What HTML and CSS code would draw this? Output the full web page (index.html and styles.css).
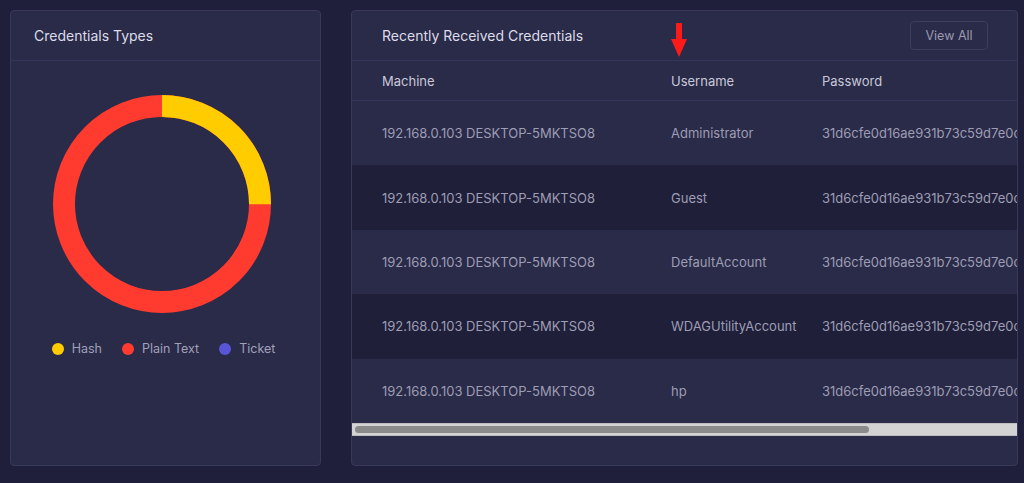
FILE: index.html
```html
<!DOCTYPE html>
<html>
<head>
    <title>Credentials</title>
    <link rel="stylesheet" href="styles.css">
</head>
<body>
    <div class="dashboard">
        <div class="card types">
            <div class="card-header">
                <h2>Credentials Types</h2>
            </div>
            <div class="chart-body">
                <svg class="donut" width="218" height="218" viewBox="0 0 218 218">
                    <circle cx="109" cy="109" r="98" fill="none" stroke="#ff3b30" stroke-width="22"/>
                    <circle cx="109" cy="109" r="98" fill="none" stroke="#ffcc00" stroke-width="22"
                            stroke-dasharray="153.94 615.75" transform="rotate(-90 109 109)"/>
                </svg>
                <div class="legend">
                    <span class="legend-item"><i class="dot hash"></i>Hash</span>
                    <span class="legend-item"><i class="dot plain"></i>Plain Text</span>
                    <span class="legend-item"><i class="dot ticket"></i>Ticket</span>
                </div>
            </div>
        </div>

        <div class="card recent">
            <div class="card-header">
                <h2>Recently Received Credentials</h2>
                <button class="btn">View All</button>
            </div>
            <div class="table-wrap">
                <table>
                    <colgroup>
                        <col class="col-machine">
                        <col class="col-user">
                        <col>
                    </colgroup>
                    <thead>
                        <tr><th>Machine</th><th>Username</th><th>Password</th></tr>
                    </thead>
                    <tbody>
                        <tr><td>192.168.0.103 DESKTOP-5MKTSO8</td><td>Administrator</td><td>31d6cfe0d16ae931b73c59d7e0c089c0</td></tr>
                        <tr><td>192.168.0.103 DESKTOP-5MKTSO8</td><td>Guest</td><td>31d6cfe0d16ae931b73c59d7e0c089c0</td></tr>
                        <tr><td>192.168.0.103 DESKTOP-5MKTSO8</td><td>DefaultAccount</td><td>31d6cfe0d16ae931b73c59d7e0c089c0</td></tr>
                        <tr><td>192.168.0.103 DESKTOP-5MKTSO8</td><td>WDAGUtilityAccount</td><td>31d6cfe0d16ae931b73c59d7e0c089c0</td></tr>
                        <tr><td>192.168.0.103 DESKTOP-5MKTSO8</td><td>hp</td><td>31d6cfe0d16ae931b73c59d7e0c089c0</td></tr>
                    </tbody>
                </table>
            </div>
            <div class="scrollbar"><div class="thumb" style="width: 78%"></div></div>
            <!-- annotation arrow -->
            <svg class="marker" width="16" height="34" viewBox="0 0 16 34">
                <path d="M5 0 H11 V16 H16 L8 34 L0 16 H5 Z" fill="#ff1a1a"/>
            </svg>
        </div>
    </div>
</body>
</html>
```

FILE: styles.css
```css
body {
    margin: 0;
    background: #1f1f3b;
    font-family: Inter, "Noto Sans", sans-serif;
    color: #9d9db3;
}
.dashboard {
    display: grid;
    grid-template-columns: 311px 667px;
    gap: 30px;
    padding: 10px 0 0 10px;
}
.card {
    background: #2a2a49;
    border: 1px solid #383858;
    border-radius: 4px;
    height: 454px;
    overflow: hidden;
}
.card-header {
    height: 49px;
    border-bottom: 1px solid #35355a;
    display: flex;
    align-items: center;
    justify-content: space-between;
    padding: 0 23px;
}
.recent .card-header {
    padding: 0 29px 0 30px;
}
h2 {
    margin: 0;
    font-size: 14px;
    font-weight: 400;
    color: #dcdce8;
}
.btn {
    font-family: inherit;
    font-size: 12.5px;
    color: #9a9ab0;
    background: transparent;
    border: 1px solid #3d3d60;
    border-radius: 4px;
    width: 78px;
    height: 29px;
}

/* donut + legend */
.chart-body {
    display: flex;
    flex-direction: column;
    align-items: center;
    padding: 34px 4px 0 0;
}
.donut {
    display: block;
    margin-right: 3px;
}
.legend {
    display: flex;
    gap: 20px;
    margin-top: 28px;
    font-size: 12.5px;
    color: #a0a0b8;
}
.legend-item {
    display: flex;
    align-items: center;
    gap: 8px;
}
.dot {
    width: 12px;
    height: 12px;
    border-radius: 50%;
}
.dot.hash { background: #ffcc00; }
.dot.plain { background: #ff3b30; }
.dot.ticket { background: #5856d6; }

/* table */
.recent {
    position: relative;
}
.table-wrap {
    overflow: hidden;
}
table {
    width: 860px;
    table-layout: fixed;
    border-collapse: collapse;
    font-size: 13px;
    white-space: nowrap;
}
.col-machine { width: 289px; }
.col-user { width: 151px; }
th {
    text-align: left;
    font-weight: 400;
    color: #c8c8d8;
    height: 39px;
    padding: 0 0 0 30px;
    border-bottom: 1px solid #35355a;
}
td {
    height: 64.4px;
    padding: 0 0 0 30px;
}
tbody tr:nth-child(even) {
    background: #1f1f3a;
}
.scrollbar {
    height: 13px;
    box-sizing: border-box;
    padding: 2px 3px;
    background: #d3d3d3;
    border-top: 1px solid #bdbdbd;
    border-bottom: 1px solid #bdbdbd;
}
.thumb {
    height: 100%;
    background: #8a8a8a;
    border-radius: 5px;
}
.marker {
    position: absolute;
    left: 319px;
    top: 12px;
}
```
